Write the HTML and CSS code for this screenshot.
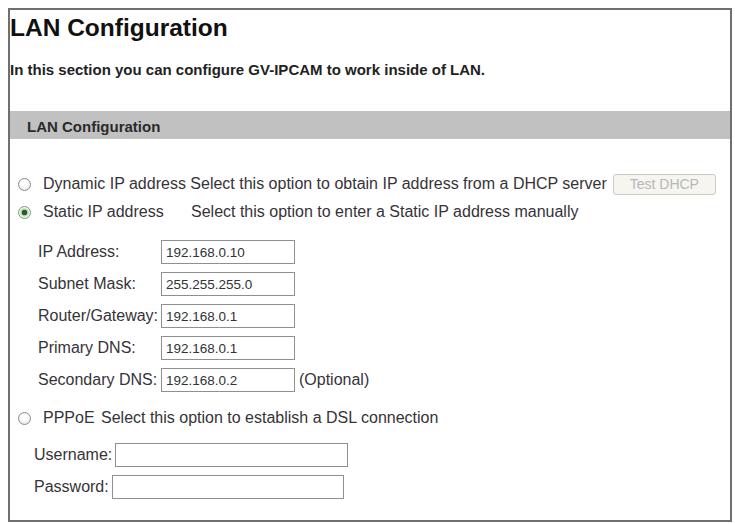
FILE: index.html
```html
<!DOCTYPE html>
<html lang="en">
<head>
    <meta charset="UTF-8">
    <meta name="viewport" content="width=device-width, initial-scale=1.0">
    <title>LAN Configuration</title>
    <link rel="stylesheet" href="styles.css">
</head>
<body>
    <div class="panel">
        <h1 class="title">LAN Configuration</h1>
        <p class="intro">In this section you can configure GV-IPCAM to work inside of LAN.</p>
        <div class="bar">LAN Configuration</div>

        <!-- 地址方式 -->
        <div class="opt opt-first">
            <input type="radio" name="mode" class="radio">
            <span>Dynamic IP address Select this option to obtain IP address from a DHCP server</span>
            <button class="btn" disabled>Test DHCP</button>
        </div>
        <div class="opt">
            <input type="radio" name="mode" class="radio" checked>
            <span class="name name-static">Static IP address</span>
            <span>Select this option to enter a Static IP address manually</span>
        </div>

        <div class="fields">
            <div class="row"><label class="lbl">IP Address:</label><input class="txt" type="text" value="192.168.0.10"></div>
            <div class="row"><label class="lbl">Subnet Mask:</label><input class="txt" type="text" value="255.255.255.0"></div>
            <div class="row"><label class="lbl">Router/Gateway:</label><input class="txt" type="text" value="192.168.0.1"></div>
            <div class="row"><label class="lbl">Primary DNS:</label><input class="txt" type="text" value="192.168.0.1"></div>
            <div class="row"><label class="lbl">Secondary DNS:</label><input class="txt" type="text" value="192.168.0.2"><span class="note">(Optional)</span></div>
        </div>

        <div class="opt opt-pppoe">
            <input type="radio" name="mode" class="radio">
            <span class="name name-pppoe">PPPoE</span>
            <span>Select this option to establish a DSL connection</span>
        </div>

        <div class="login">
            <div class="row"><label>Username:</label><input class="txt txt-user" type="text"></div>
            <div class="row"><label>Password:</label><input class="txt txt-pass" type="password"></div>
        </div>
    </div>
</body>
</html>
```

FILE: styles.css
```css
*{
    padding: 0;
    margin: 0;
    box-sizing: border-box;
}
body{
    margin: 8px 3px 2px 8px;
    font-family: "Liberation Sans", Arial, sans-serif;
    font-size: 16px;
    color: #363338;
    background: #fff;
}
.panel{
    height: 514px;
    border: 2px solid #707070;
}
.title{
    margin-top: 4px;
    font-size: 24.5px;
    line-height: 28px;
    font-weight: bold;
    color: #111;
}
.intro{
    margin-top: 19px;
    font-size: 15px;
    line-height: 18px;
    font-weight: bold;
    color: #222;
}
.bar{
    margin-top: 32px;
    height: 28px;
    padding: 4px 0 0 17px;
    line-height: 24px;
    font-size: 15px;
    font-weight: bold;
    color: #2a2a2a;
    background-color: #c1c1c1;
}
.opt{
    display: flex;
    align-items: center;
    height: 28px;
    padding-left: 8px;
}
.opt-first{
    margin-top: 31px;
}
.radio{
    appearance: none;
    -webkit-appearance: none;
    width: 13px;
    height: 13px;
    margin-right: 12px;
    border: 1px solid #8c8c8c;
    border-radius: 50%;
    background: radial-gradient(circle at 50% 40%, #fff 30%, #dedede 100%);
}
.radio:checked{
    border-color: #7e9a7e;
    background: radial-gradient(circle, #2f5a2f 0 2.5px, #9ccf9c 3px, #e4f3e4 4.5px, #fff 6px);
}
.name-static{
    width: 148px;
}
.name-pppoe{
    width: 58px;
}
.btn{
    margin-left: 6px;
    width: 103px;
    height: 21px;
    font-family: "Liberation Sans", Arial, sans-serif;
    font-size: 14px;
    color: #b8b8b8;
    background-color: #f6f5f0;
    border: 1px solid #cbcbc4;
    border-radius: 3px;
}
.fields{
    margin-top: 10px;
    padding-left: 28px;
}
.row{
    display: flex;
    align-items: center;
    height: 32px;
}
.lbl{
    width: 123px;
}
.txt{
    height: 24px;
    width: 134px;
    padding: 0 4px;
    border: 1px solid #8f8f8f;
    font-family: "Liberation Sans", Arial, sans-serif;
    font-size: 13.5px;
    color: #333;
    background: #fff;
}
.note{
    margin-left: 4px;
}
.opt-pppoe{
    margin-top: 8px;
}
.login{
    margin-top: 7px;
    padding-left: 24px;
}
.login .txt{
    margin-left: 3px;
}
.txt-user{
    width: 233px;
}
.txt-pass{
    width: 232px;
}
```
